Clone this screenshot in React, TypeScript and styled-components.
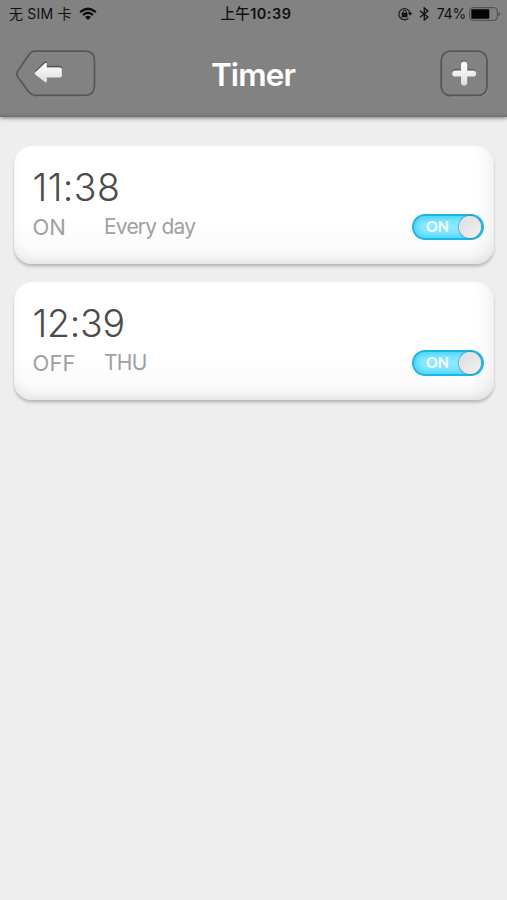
import React from "react";
import styled, { createGlobalStyle } from "styled-components";

const GlobalStyle = createGlobalStyle`
  * { box-sizing: border-box; }
  body { margin: 0; background: #eeeeee; font-family: Inter, "Noto Sans CJK SC", sans-serif; }
`;

const Screen = styled.div`
  width: 507px;
  height: 900px;
  overflow: hidden;
  background: #eeeeee;
`;

const Header = styled.header`
  height: 117px;
  background: linear-gradient(#828282 0, #828282 113px, #727272 117px);
  box-shadow: 0 1px 4px rgba(0, 0, 0, 0.5);
`;

const StatusBar = styled.div`
  height: 28px;
  padding: 0 6px 0 9px;
  display: grid;
  grid-template-columns: 1fr auto 1fr;
  align-items: center;
  color: #111;
  font-size: 14px;
  line-height: 28px;
  white-space: nowrap;
`;

const StatusGroup = styled.div<{ $end?: boolean }>`
  display: flex;
  align-items: center;
  justify-content: ${(p) => (p.$end ? "flex-end" : "flex-start")};
  svg { display: block; flex: none; }
`;

const Carrier = styled.span`
  margin-right: 7px;
  letter-spacing: 0.2px;
`;

const Clock = styled.span`
  padding-left: 2px;
  font-weight: 600;
  font-size: 14.5px;
  letter-spacing: 0.5px;
`;

const Meridiem = styled.span`
  font-weight: 500;
  letter-spacing: 0.3px;
`;

const Charge = styled.span`
  margin: 0 3px 0 0;
  letter-spacing: -0.2px;
`;

const NavBar = styled.div`
  height: 89px;
  padding: 21px 18px 0 15px;
  display: grid;
  grid-template-columns: 82px 1fr 82px;
`;

const Title = styled.h1`
  margin: 0;
  padding: 6px 0 0 2px;
  text-align: center;
  color: #fff;
  font-size: 31.5px;
  line-height: 40px;
  font-weight: 600;
  letter-spacing: -0.9px;
`;

const IconButton = styled.button<{ $end?: boolean }>`
  padding: 0;
  border: 0;
  background: none;
  height: 49px;
  justify-self: ${(p) => (p.$end ? "end" : "start")};
  svg { display: block; }
`;

const List = styled.main`
  padding: 29px 13px 0 14px;
  display: flex;
  flex-direction: column;
  gap: 18px;
`;

const Card = styled.section`
  height: 118px;
  padding: 18px 10px 0 18.5px;
  border-radius: 18px;
  background: linear-gradient(#fff 65%, #f8f8f8 100%);
  box-shadow: 0 3px 3px rgba(0, 0, 0, 0.18), 0 1px 2px rgba(0, 0, 0, 0.06),
    inset -9px -6px 18px -7px rgba(0, 0, 0, 0.09), inset 4px -5px 14px -6px rgba(0, 0, 0, 0.07);
`;

const Time = styled.div<{ $spacing: number }>`
  height: 47px;
  line-height: 47px;
  font-size: 37.5px;
  font-weight: 350;
  letter-spacing: ${(p) => p.$spacing}px;
  color: #4c4c4c;
`;

const Details = styled.div`
  height: 32px;
  display: flex;
  align-items: center;
  color: #a0a0a0;
  font-size: 22px;
`;

const Action = styled.span<{ $spacing: number }>`
  width: 71.5px;
  letter-spacing: ${(p) => p.$spacing}px;
  line-height: 30px;
  padding-bottom: 1px;
`;

const Days = styled.span<{ $spacing: number }>`
  flex: 1;
  font-size: 21px;
  line-height: 30px;
  letter-spacing: ${(p) => p.$spacing}px;
`;

const Switch = styled.button`
  width: 72px;
  height: 26px;
  padding: 0 2px 0 12px;
  display: flex;
  align-items: center;
  justify-content: space-between;
  border: 2px solid #18b7e7;
  border-radius: 13px;
  background: #8ae8ff;
  box-shadow: inset 0 0 6px 2px #39d0fb;
`;

const SwitchText = styled.span`
  color: #effcff;
  font: 900 14.5px/20px Lato, sans-serif;
`;

const Knob = styled.span`
  width: 22px;
  height: 22px;
  margin-right: -1px;
  border-radius: 50%;
  background: linear-gradient(135deg, #dedede, #f0f0f0);
  box-shadow: 0 0 1px 1px rgba(75, 125, 145, 0.55);
`;

function WifiIcon() {
  return (
    <svg width="18" height="14" viewBox="0 0 18 14">
      <g fill="none" stroke="#0b0b0b" strokeWidth="2.3">
        <path d="M1.2 5.1Q9-1.7 16.8 5.1" />
        <path d="M4 8Q9 3.6 14 8" />
      </g>
      <path d="M6 10Q9 7.6 12 10L9 13Z" fill="#0b0b0b" />
    </svg>
  );
}

function RotationLockIcon() {
  return (
    <svg width="15" height="14" viewBox="0 0 15 14">
      <path d="M10.4 11.2A5.6 5.6 0 1 1 12 6" fill="none" stroke="#222" strokeWidth="1.3" />
      <path d="M9.9 5.8h4.4l-2.2 3z" fill="#111" />
      <rect x="3.7" y="5.8" width="5.7" height="4.4" rx=".5" fill="#111" />
      <path d="M4.9 6V4.9a1.65 1.65 0 0 1 3.3 0V6" fill="none" stroke="#111" strokeWidth="1" />
    </svg>
  );
}

function BluetoothIcon() {
  return (
    <svg width="24" height="14" viewBox="0 0 24 14">
      <path d="M6.9 3.8l8 6.2-3.6 3V1l3.6 3-8 6.2" fill="none" stroke="#151515" strokeWidth="1.4" />
    </svg>
  );
}

function BatteryIcon() {
  return (
    <svg width="32" height="14" viewBox="0 0 32 14">
      <rect x=".7" y=".7" width="27.6" height="12.6" rx="3" fill="none" stroke="#4b4b4b" strokeWidth="1" />
      <rect x="2.3" y="2.3" width="18" height="9.4" rx="1" fill="#050505" />
      <path d="M29.5 4.7q3 2.3 0 4.6z" fill="#4b4b4b" />
    </svg>
  );
}

function BackIcon() {
  return (
    <svg width="82" height="49" viewBox="0 0 82 49">
      <defs>
        <linearGradient id="arrowFill" x2="0" y2="1">
          <stop stopColor="#fff" />
          <stop offset="1" stopColor="#ddd" />
        </linearGradient>
      </defs>
      <path d="M20 2.2H70Q79.5 2.2 79.5 11.5V37Q79.5 46.5 70 46.5H22Q17 46.5 13.5 42.5L3.3 28.8Q.5 25 3.3 21.2L13 7Q16 2.2 20 2.2Z" fill="none" stroke="#575757" strokeWidth="1.8" />
      <path d="M22.5 47.8H70Q80.8 47.8 80.8 38" fill="none" stroke="#949494" strokeWidth=".6" />
      <path d="M20.4 22.6L30.2 13.1Q31 12.7 31.3 13.5V17.5H44.5Q46.3 17.5 46.3 19V26.4" fill="none" stroke="#555" strokeWidth="1.5" />
      <path d="M20.3 23.3L30 14.2Q31.8 13.2 31.8 15.2V18.6H45Q46.9 18.6 46.9 20.4V26.8Q46.9 28.6 45 28.6H31.8V32Q31.8 34.4 30 33L20.3 25.4Q19 24.3 20.3 23.3Z" fill="url(#arrowFill)" />
    </svg>
  );
}

function AddIcon() {
  return (
    <svg width="49" height="49" viewBox="0 0 49 49">
      <defs>
        <linearGradient id="plusFill" x2="0" y2="1">
          <stop stopColor="#fff" />
          <stop offset="1" stopColor="#ddd" />
        </linearGradient>
      </defs>
      <rect x="1.2" y="2.2" width="45.8" height="44.3" rx="9" fill="none" stroke="#575757" strokeWidth="1.8" />
      <path d="M11 47.8H38Q48.4 47.8 48.4 38" fill="none" stroke="#949494" strokeWidth=".6" />
      <path d="M23.9 14.6V31M15.2 23.3H32.8" stroke="#555" strokeWidth="6" strokeLinecap="round" />
      <path d="M21 15.6a3.1 3.1 0 0 1 6.2 0V21.4H33a3.1 3.1 0 0 1 0 6.2H27.2V33.5a3.1 3.1 0 0 1-6.2 0V27.6H15.3a3.1 3.1 0 0 1 0-6.2H21Z" fill="url(#plusFill)" />
    </svg>
  );
}

const timers = [
  { time: "11:38", action: "ON", days: "Every day", timeSpacing: 0.4, actionSpacing: 0, daySpacing: -0.8 },
  { time: "12:39", action: "OFF", days: "THU", timeSpacing: -0.3, actionSpacing: 0.1, daySpacing: -0.7 },
];

export default function App() {
  return (
    <>
      <GlobalStyle />
      <Screen>
        <Header>
          <StatusBar>
            <StatusGroup><Carrier>无 SIM 卡</Carrier><WifiIcon /></StatusGroup>
            <Clock><Meridiem>上午</Meridiem>10:39</Clock>
            <StatusGroup $end><RotationLockIcon /><BluetoothIcon /><Charge>74%</Charge><BatteryIcon /></StatusGroup>
          </StatusBar>
          <NavBar>
            <IconButton aria-label="Back"><BackIcon /></IconButton>
            <Title>Timer</Title>
            <IconButton $end aria-label="Add timer"><AddIcon /></IconButton>
          </NavBar>
        </Header>
        <List>
          {timers.map((timer) => (
            <Card key={timer.time}>
              <Time $spacing={timer.timeSpacing}>{timer.time}</Time>
              <Details>
                <Action $spacing={timer.actionSpacing}>{timer.action}</Action>
                <Days $spacing={timer.daySpacing}>{timer.days}</Days>
                <Switch role="switch" aria-checked="true"><SwitchText>ON</SwitchText><Knob /></Switch>
              </Details>
            </Card>
          ))}
        </List>
      </Screen>
    </>
  );
}
